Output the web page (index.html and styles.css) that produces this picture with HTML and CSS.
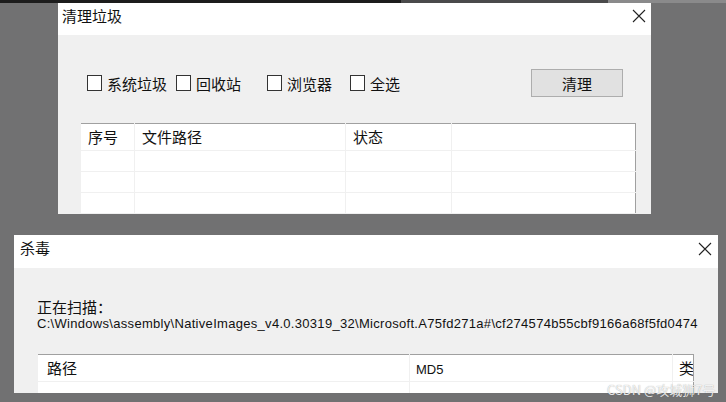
FILE: index.html
```html
<!DOCTYPE html>
<html lang="zh-CN">
<head>
  <meta charset="UTF-8">
  <title>清理垃圾 / 杀毒</title>
  <link rel="stylesheet" href="styles.css">
</head>
<body>

  <div class="top-strip">
    <span class="strip-dark"></span>
    <span class="strip-mid"></span>
    <span class="strip-light"></span>
  </div>

  <div class="window clean-window">
    <div class="title-bar">
      <span class="title">清理垃圾</span>
      <svg class="close" width="14" height="14" viewBox="0 0 14 14">
        <path d="M1 1 L13 13 M13 1 L1 13" stroke="#222" stroke-width="1.1" fill="none"/>
      </svg>
    </div>
    <div class="window-body">
      <div class="option-row">
        <label class="check check-sys"><span class="box"></span>系统垃圾</label>
        <label class="check check-bin"><span class="box"></span>回收站</label>
        <label class="check check-web"><span class="box"></span>浏览器</label>
        <label class="check"><span class="box"></span>全选</label>
        <button class="win-button">清理</button>
      </div>

      <table class="list clean-list">
        <tr class="head">
          <td class="c-no">序号</td>
          <td class="c-path">文件路径</td>
          <td class="c-state">状态</td>
          <td></td>
        </tr>
        <tr><td></td><td></td><td></td><td></td></tr>
        <tr><td></td><td></td><td></td><td></td></tr>
        <tr><td></td><td></td><td></td><td></td></tr>
        <tr><td></td><td></td><td></td><td></td></tr>
      </table>
    </div>
  </div>

  <div class="window scan-window">
    <div class="title-bar">
      <span class="title">杀毒</span>
      <svg class="close" width="14" height="14" viewBox="0 0 14 14">
        <path d="M1 1 L13 13 M13 1 L1 13" stroke="#222" stroke-width="1.1" fill="none"/>
      </svg>
    </div>
    <div class="window-body scan-body">
      <div class="scan-label">正在扫描：</div>
      <div class="scan-path">C:\Windows\assembly\NativeImages_v4.0.30319_32\Microsoft.A75fd271a#\cf274574b55cbf9166a68f5fd0474</div>

      <table class="list scan-list">
        <tr class="head">
          <td class="c-file">路径</td>
          <td class="c-md5">MD5</td>
          <td class="c-type">类</td>
        </tr>
        <tr><td></td><td></td><td></td></tr>
      </table>
    </div>
  </div>

  <div class="watermark">CSDN @攻城狮7号</div>

</body>
</html>
```

FILE: styles.css
```css
body {
  margin: 0;
  width: 726px;
  height: 402px;
  overflow: hidden;
  background-color: #717172;
  font-family: "Noto Sans CJK SC", "Liberation Sans", sans-serif;
  color: #111;
  position: relative;
}

.top-strip {
  display: flex;
  height: 3px;
}

.strip-dark {
  width: 401px;
  background-color: #1c1c1c;
}

.strip-mid {
  width: 207px;
  background-color: #4a4a4b;
}

.strip-light {
  flex: 1;
  background-color: #8a8a8b;
}

/* windows sit on the grey desktop */
.window {
  position: absolute;
  display: flex;
  flex-direction: column;
  background-color: #f0f0f0;
  overflow: hidden;
}

.clean-window {
  left: 58px;
  top: 3px;
  width: 593px;
  height: 211px;
}

.scan-window {
  left: 14px;
  top: 235px;
  width: 704px;
  height: 158px;
}

.title-bar {
  display: flex;
  align-items: center;
  justify-content: space-between;
  height: 32px;
  padding: 0 5px 0 4px;
  background-color: #fff;
  flex-shrink: 0;
}

.scan-window .title-bar {
  height: 33px;
  padding: 0 6px 0 6px;
}

.title {
  font-size: 15px;
  line-height: 1;
  margin-top: -8px;
}

.close {
  margin-top: -6px;
}

.window-body {
  padding: 34px 15px 0 22px;
}

.option-row {
  display: flex;
  align-items: center;
  height: 28px;
  padding-left: 7px;
  padding-right: 13px;
}

.check {
  display: flex;
  align-items: center;
  gap: 5px;
  font-size: 15px;
}

.check-sys { width: 89px; }
.check-bin { width: 91px; }
.check-web { width: 83px; }

.box {
  width: 13px;
  height: 14px;
  border: 1px solid #333;
  background-color: #fff;
}

.win-button {
  margin-left: auto;
  width: 92px;
  height: 28px;
  background-color: #e1e1e1;
  border: 1px solid #adadad;
  font-family: inherit;
  font-size: 15px;
  color: #111;
  padding: 0;
}

.list {
  border-collapse: collapse;
  background-color: #fff;
  border: 1px solid #a0a0a0;
  table-layout: fixed;
  font-size: 15px;
}

.list td {
  box-sizing: border-box;
  border-left: 1px solid #f0f0f0;
  border-top: 1px solid #f0f0f0;
  height: 21px;
  padding: 0 7px;
  vertical-align: top;
  overflow: hidden;
  white-space: nowrap;
}

.list .head td {
  height: 27px;
  border-top: none;
  padding-top: 2px;
}

.clean-list {
  width: 556px;
  margin-top: 26px;
}

.c-no { width: 54px; }
.c-path { width: 211px; }
.c-state { width: 106px; }

.scan-body {
  padding: 30px 0 0 23px;
}

.scan-label {
  font-size: 15px;
  line-height: 18px;
}

.scan-path {
  font-family: "Liberation Sans", sans-serif;
  font-size: 13px;
  letter-spacing: 0.3px;
  line-height: 16px;
  white-space: nowrap;
}

.scan-list {
  width: 657px;
  margin-top: 22px;
}

.scan-list td {
  height: 30px;
}

.scan-list .head .c-file { width: 372px; padding-left: 9px; }
.scan-list .head .c-md5 {
  width: 263px;
  font-family: "Liberation Sans", sans-serif;
  font-size: 13px;
  padding: 7px 6px 0;
}
.scan-list .head .c-type { padding: 2px 0 0 6px; }

.watermark {
  position: absolute;
  left: 607px;
  top: 380px;
  font-size: 13px;
  color: rgba(255, 255, 255, 0.85);
  text-shadow: 0 0 1px rgba(90, 90, 90, 0.6);
  white-space: nowrap;
}
```
